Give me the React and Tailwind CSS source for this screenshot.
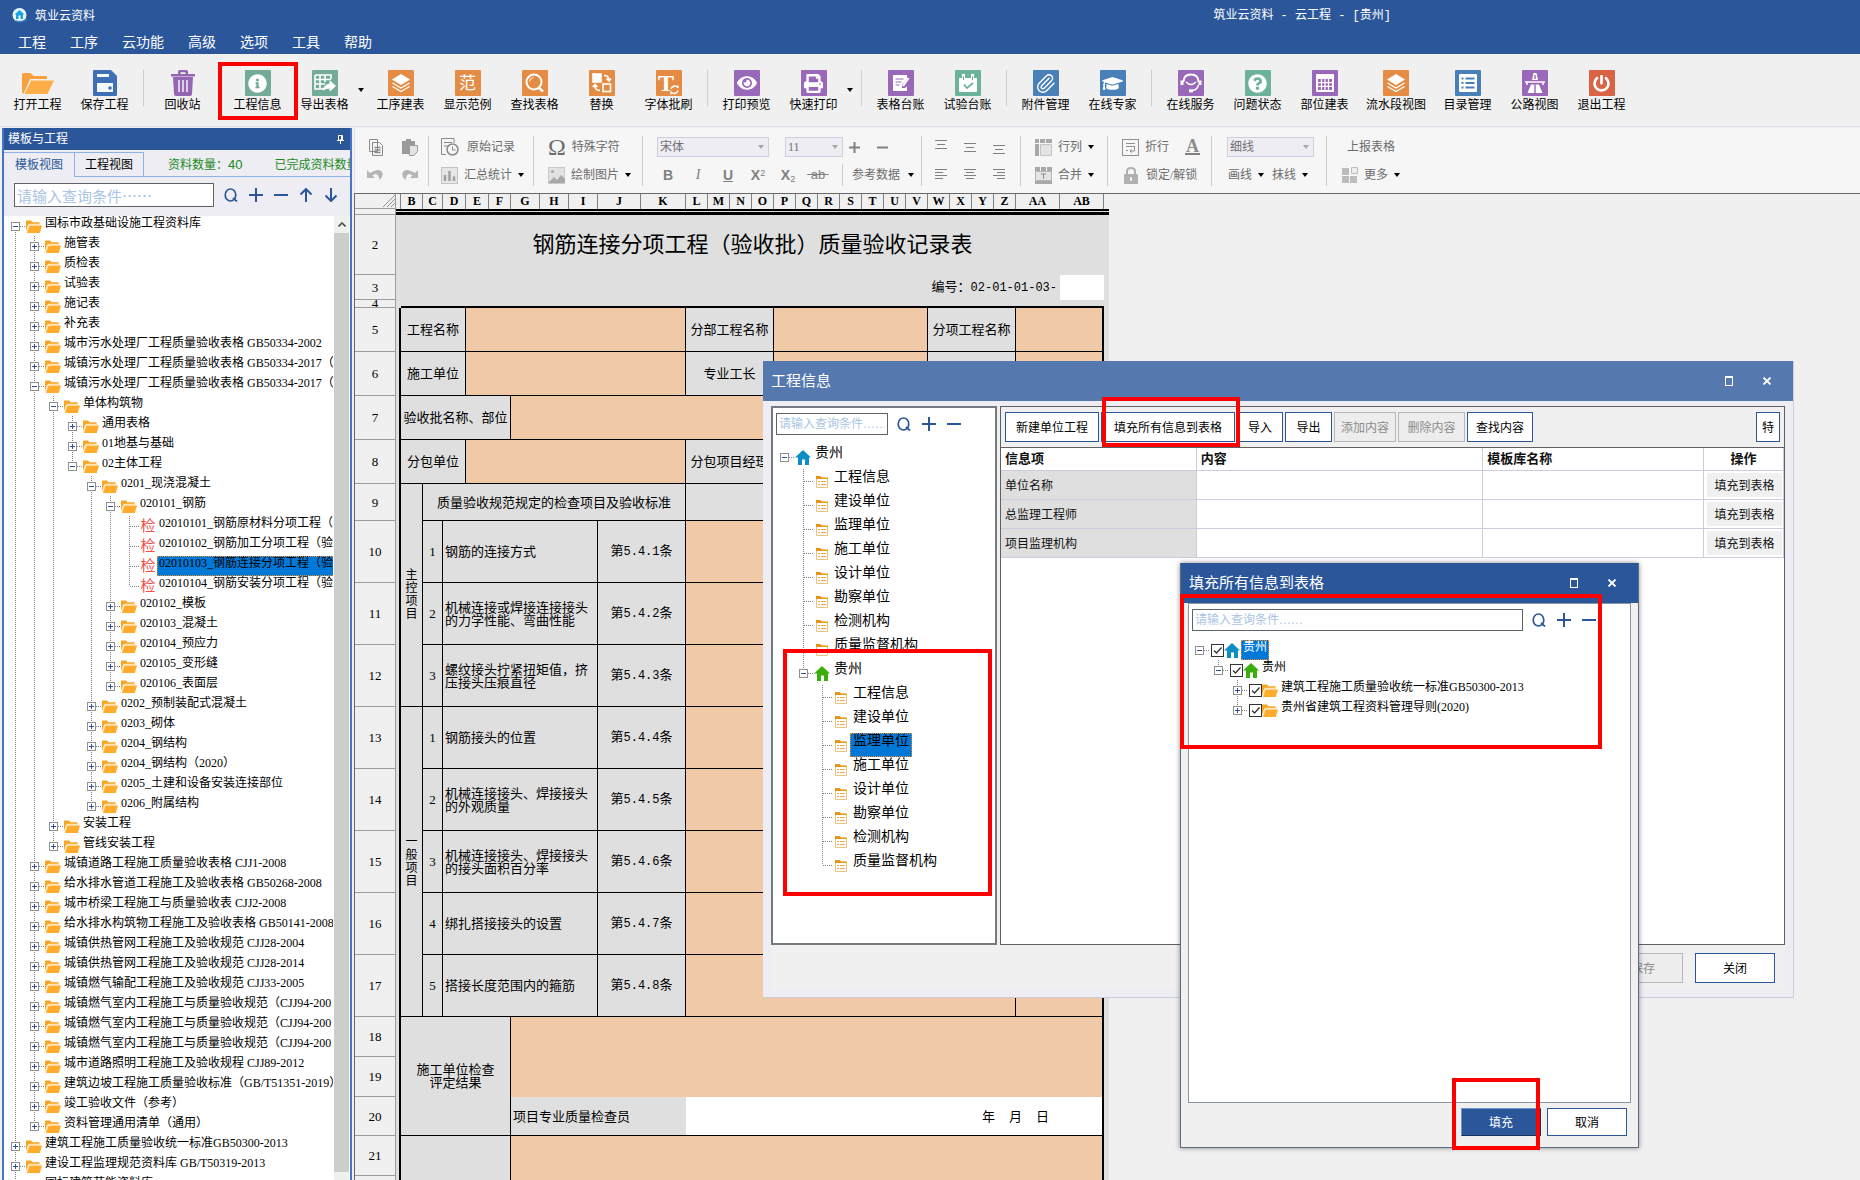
import { Fragment } from "react";
import { FaEye, FaPrint, FaGraduationCap, FaQuestionCircle, FaInfoCircle, FaPowerOff } from "react-icons/fa";
import { Paperclip } from "lucide-react";

/* ---------- small shared drawings ---------- */

const Caret = ({ className = "fill-black" }) => (
  <svg width="6" height="4" viewBox="0 0 6 4" className={`shrink-0 ${className}`}>
    <path d="M0 0h6L3 4z" />
  </svg>
);

const SearchIcon = () => (
  <svg width="14" height="14" viewBox="0 0 14 14" fill="none" stroke="#2b579a" strokeWidth="1.700">
    <ellipse cx="6.500" cy="7" rx="5.300" ry="6" />
    <path d="M9 10l4 3.500" />
  </svg>
);

const PlusIcon = () => (
  <svg width="14" height="14" viewBox="0 0 14 14" stroke="#2b579a" strokeWidth="2">
    <path d="M7 0v14M0 7h14" />
  </svg>
);

const MinusIcon = () => (
  <svg width="14" height="14" viewBox="0 0 14 14" stroke="#2b579a" strokeWidth="2">
    <path d="M0 7h14" />
  </svg>
);

const ArrowIcon = ({ down }) => (
  <svg width="14" height="14" viewBox="0 0 14 14" fill="none" stroke="#2b579a" strokeWidth="2">
    {down ? <path d="M7 0v13M1.500 7.500L7 13l5.500-5.500" /> : <path d="M7 14V1M1.500 6.500L7 1l5.500 5.500" />}
  </svg>
);

const FolderIcon = () => (
  <svg width="16" height="13" viewBox="0 0 16 13">
    <path d="M0 11V1.200Q0 .5 .7 .5H5l1.500 1.800H13.500V4H3.800L2 5z" fill="#f5a623" />
    <path d="M.8 12L3.300 4.300H14V5.500" fill="none" stroke="#fde3b5" strokeWidth="1.200" />
    <path d="M3.600 5.500H16L13.800 13H1z" fill="#ffab2b" />
  </svg>
);

const FormIcon = () => (
  <svg width="16" height="13" viewBox="0 0 16 13">
    <path d="M2.500 3v9.500h11V3.500" fill="none" stroke="#ecc27a" />
    <path d="M2 1h4.500l1.500 1.500h6V4H2z" fill="#e79412" />
    <path d="M4 6.500h2M7 6.500h5M4 9.500h2M7 9.500h5" stroke="#eaa94a" />
  </svg>
);

const HouseIcon = ({ color }) => (
  <svg width="16" height="15" viewBox="0 0 16 15">
    <path d="M8 0l8 7.500h-2V15h-4V9.500H7V15H3V7.500H0z" fill={color} />
  </svg>
);

const icons = {
  folder: <FolderIcon />,
  form: <FormIcon />,
  blueHouse: <HouseIcon color="#0a8fc4" />,
  greenHouse: <HouseIcon color="#3aae0a" />,
  check: <span className="text-[15px] leading-4 text-[#f0504a]">检</span>,
};

/* ---------- tree view ---------- */

// does the branch at `depth` go on below row `index`?
const continues = (rows, index, depth) => {
  for (let i = index + 1; i < rows.length; i++) {
    if (rows[i].depth < depth) return false;
    if (rows[i].depth === depth) return true;
  }
  return false;
};

const Joint = ({ h, top, bottom, sign }) => (
  <svg width="20" height={h} shapeRendering="crispEdges" className="block">
    <g stroke="#808080" strokeDasharray="1 1">
      {top && <path d={`M9.500 0V${h / 2}`} />}
      {bottom && <path d={`M9.500 ${h / 2}V${h}`} />}
      <path d={`M9.500 ${h / 2 + 0.5}H20`} />
    </g>
    {sign && (
      <>
        <rect x="5.500" y={h / 2 - 3.5} width="8" height="8" fill="#fff" stroke="#8f8f8f" />
        <path d={`M7 ${h / 2 + 0.5}h5`} stroke="#2f4f9f" />
        {sign === "+" && <path d={`M9.500 ${h / 2 - 2}v5`} stroke="#2f4f9f" />}
      </>
    )}
  </svg>
);

const Tree = ({ rows, rowHeight, rowClass, textClass, selectedClass = "text-black" }) => (
  <ul>
    {rows.map((row, i) => (
      <li key={i} className={`flex items-start ${rowClass}`}>
        {Array.from({ length: row.depth }, (_, d) => (
          <svg key={d} width="19" height={rowHeight} shapeRendering="crispEdges" className="shrink-0">
            {continues(rows, i, d) && (
              <path d={`M9.500 0V${rowHeight}`} stroke="#808080" strokeDasharray="1 1" />
            )}
          </svg>
        ))}
        {row.sign ? (
          <button aria-label={row.sign === "+" ? "展开" : "折叠"} className="shrink-0">
            <Joint h={rowHeight} top={i > 0} bottom={continues(rows, i, row.depth)} sign={row.sign} />
          </button>
        ) : (
          <span className="shrink-0">
            <Joint h={rowHeight} top={i > 0} bottom={continues(rows, i, row.depth)} />
          </span>
        )}
        {row.checkbox && (
          <span className="ml-px flex h-full shrink-0 items-center">
            <input
              type="checkbox"
              defaultChecked
              aria-label={row.text}
              className="peer h-[13px] w-[13px] appearance-none border border-[#333] bg-white"
            />
            <svg width="13" height="13" viewBox="0 0 13 13" className="pointer-events-none -ml-[13px] hidden peer-checked:block">
              <path d="M3 6.500l2.500 2.500L10.500 3.500" fill="none" stroke="#333" strokeWidth="1.300" />
            </svg>
          </span>
        )}
        <span className="flex h-full w-4 shrink-0 items-center justify-center">{icons[row.icon]}</span>
        <span
          className={`ml-px h-full whitespace-nowrap ${textClass} ${
            row.selected
              ? `bg-[#0078d7] outline-1 -outline-offset-1 outline-dotted outline-[#e88a2a] ${selectedClass}`
              : ""
          }`}
        >
          {row.text}
        </span>
      </li>
    ))}
  </ul>
);

const node = (depth, sign, text, extra) => ({ depth, sign, text, icon: "folder", ...extra });

const templateTree = [
  node(0, "-", "国标市政基础设施工程资料库"),
  node(1, "+", "施管表"),
  node(1, "+", "质检表"),
  node(1, "+", "试验表"),
  node(1, "+", "施记表"),
  node(1, "+", "补充表"),
  node(1, "+", "城市污水处理厂工程质量验收表格 GB50334-2002"),
  node(1, "+", "城镇污水处理厂工程质量验收表格 GB50334-2017（"),
  node(1, "-", "城镇污水处理厂工程质量验收表格 GB50334-2017（"),
  node(2, "-", "单体构筑物"),
  node(3, "+", "通用表格"),
  node(3, "+", "01地基与基础"),
  node(3, "-", "02主体工程"),
  node(4, "-", "0201_现浇混凝土"),
  node(5, "-", "020101_钢筋"),
  node(6, "", "02010101_钢筋原材料分项工程（", { icon: "check" }),
  node(6, "", "02010102_钢筋加工分项工程（验", { icon: "check" }),
  node(6, "", "02010103_钢筋连接分项工程（验", { icon: "check", selected: true }),
  node(6, "", "02010104_钢筋安装分项工程（验", { icon: "check" }),
  node(5, "+", "020102_模板"),
  node(5, "+", "020103_混凝土"),
  node(5, "+", "020104_预应力"),
  node(5, "+", "020105_变形缝"),
  node(5, "+", "020106_表面层"),
  node(4, "+", "0202_预制装配式混凝土"),
  node(4, "+", "0203_砌体"),
  node(4, "+", "0204_钢结构"),
  node(4, "+", "0204_钢结构（2020）"),
  node(4, "+", "0205_土建和设备安装连接部位"),
  node(4, "+", "0206_附属结构"),
  node(2, "+", "安装工程"),
  node(2, "+", "管线安装工程"),
  node(1, "+", "城镇道路工程施工质量验收表格 CJJ1-2008"),
  node(1, "+", "给水排水管道工程施工及验收表格 GB50268-2008"),
  node(1, "+", "城市桥梁工程施工与质量验收表 CJJ2-2008"),
  node(1, "+", "给水排水构筑物工程施工及验收表格 GB50141-2008"),
  node(1, "+", "城镇供热管网工程施工及验收规范 CJJ28-2004"),
  node(1, "+", "城镇供热管网工程施工及验收规范 CJJ28-2014"),
  node(1, "+", "城镇燃气输配工程施工及验收规范 CJJ33-2005"),
  node(1, "+", "城镇燃气室内工程施工与质量验收规范（CJJ94-200"),
  node(1, "+", "城镇燃气室内工程施工与质量验收规范（CJJ94-200"),
  node(1, "+", "城镇燃气室内工程施工与质量验收规范（CJJ94-200"),
  node(1, "+", "城市道路照明工程施工及验收规程 CJJ89-2012"),
  node(1, "+", "建筑边坡工程施工质量验收标准（GB/T51351-2019）"),
  node(1, "+", "竣工验收文件（参考）"),
  node(1, "+", "资料管理通用清单（通用）"),
  node(0, "+", "建筑工程施工质量验收统一标准GB50300-2013"),
  node(0, "+", "建设工程监理规范资料库 GB/T50319-2013"),
  node(0, "+", "国标建筑节能资料库"),
];

const units = ["工程信息", "建设单位", "监理单位", "施工单位", "设计单位", "勘察单位", "检测机构", "质量监督机构"];

const infoTree = [
  node(0, "-", "贵州", { icon: "blueHouse" }),
  ...units.map((text) => node(1, "", text, { icon: "form" })),
  node(1, "-", "贵州", { icon: "greenHouse" }),
  ...units.map((text) => node(2, "", text, { icon: "form", selected: text === "监理单位" })),
];

const fillTree = [
  node(0, "-", "贵州", { icon: "blueHouse", checkbox: true, selected: true }),
  node(1, "-", "贵州", { icon: "greenHouse", checkbox: true }),
  node(2, "+", "建筑工程施工质量验收统一标准GB50300-2013", { checkbox: true }),
  node(2, "+", "贵州省建筑工程资料管理导则(2020)", { checkbox: true }),
];

/* ---------- main toolbar ---------- */

const Layers = () => (
  <svg width="20" height="20" viewBox="0 0 20 20">
    <path d="M10 1l9 5.500-9 5.500-9-5.500z" fill="#fff" />
    <path d="M1.500 10L10 15l8.500-5M1.500 13.500l8.500 5 8.500-5" fill="none" stroke="#fff" strokeWidth="1.400" />
  </svg>
);

const OpenFolder = () => (
  <svg width="32" height="26" viewBox="0 0 32 26">
    <path d="M0 22V4.500Q0 3 1.500 3h7l3 3H24q1 0 1 1v2H8L1.500 24z" fill="#f8a03c" />
    <path d="M9 10.500h23L25.500 24H2.500z" fill="#ffae4a" />
  </svg>
);

const Floppy = () => (
  <svg width="24" height="26" viewBox="0 0 24 26">
    <path d="M1 0h17l6 6v19q0 1-1 1H1q-1 0-1-1V1q0-1 1-1z" fill="#3f6fb5" />
    <path d="M4 4h12v3H4zM4 13h16v9H4z" fill="#f4f7fc" />
    <circle cx="17" cy="18" r="1.800" fill="#3f6fb5" />
  </svg>
);

const Bin = () => (
  <svg width="24" height="26" viewBox="0 0 24 26" fill="#9567b3">
    <path d="M7 4V1.500Q7 0 8.500 0h7Q17 0 17 1.500V4h7v2.500H0V4zM9.500 2.300V4h5V2.300z" fillRule="evenodd" />
    <path d="M2 7h20l-1 17q0 2-2 2H5q-2 0-2-2z" />
    <path d="M8 10v12M12 10v12M16 10v12" stroke="#f0e8f5" strokeWidth="1.600" />
  </svg>
);

const ExportTable = () => (
  <svg width="22" height="20" viewBox="0 0 22 20" fill="none" stroke="#fff">
    <path d="M1 2h16v4M1 2v14h9M1 6.500h16M1 11h10M6 2v14M11 2v7" strokeWidth="1.600" />
    <path d="M9 17q2-6 7-6V8l5.500 5-5.500 5v-3q-4 0-7 2z" fill="#fff" />
  </svg>
);

const Magnifier = () => (
  <svg width="20" height="20" viewBox="0 0 20 20" fill="none" stroke="#fff" strokeWidth="2">
    <circle cx="9" cy="9" r="7.500" />
    <path d="M13.500 14.500l4.500 4" strokeWidth="2.500" />
    <path d="M4.500 8.500Q5 5 8.500 4.500" strokeWidth="1" />
  </svg>
);

const Swap = () => (
  <svg width="20" height="20" viewBox="0 0 20 20" fill="none" stroke="#fff" strokeWidth="1.600">
    <rect x="1" y="1" width="8" height="8" fill="#fff" />
    <rect x="11" y="11" width="7.500" height="7.500" />
    <path d="M12 2.500q5 0 5 5M14.500 5.500L17 8l2-2.500M8 17.500q-5 0-5-5M.8 14L3 11.500 5.500 14" />
  </svg>
);

const FontBrush = () => (
  <span className="flex items-end">
    <span className="text-[24px] font-bold leading-6 [font-family:'Liberation_Serif',serif]">T</span>
    <svg width="9" height="10" viewBox="0 0 9 10" fill="none" stroke="#fff" strokeWidth="1.300" className="-ml-1">
      <path d="M1 4q1-3 4-3 2 0 3 2V.5M8 5.500q-1 3-4 3-2 0-3-2v3" />
    </svg>
  </span>
);

const Ledger = () => (
  <svg width="18" height="18" viewBox="0 0 18 18">
    <path d="M1 1h14v4l-5 6v3h3l2-2v5H1z" fill="#fff" />
    <path d="M3.500 5h8M3.500 8h6M3.500 11h4" stroke="#9968b8" />
    <path d="M11 12l5.500-8" stroke="#fff" strokeWidth="2.200" />
  </svg>
);

const CalendarCheck = () => (
  <svg width="18" height="19" viewBox="0 0 18 19">
    <path d="M0 4h18v13q0 1-1 1H1q-1 0-1-1z" fill="#fff" />
    <path d="M4.500 0v6M13.500 0v6" stroke="#fff" strokeWidth="3" />
    <path d="M4.500 2v4M13.500 2v4" stroke="#6db39c" strokeWidth="1" />
    <path d="M5 10.500l3 3.500 6-5" fill="none" stroke="#6db39c" strokeWidth="1.800" />
  </svg>
);

const Headset = () => (
  <svg width="22" height="20" viewBox="0 0 22 20" fill="none" stroke="#fff" strokeWidth="1.800">
    <path d="M3.500 9q0-7.500 7.500-7.500T18.500 9" />
    <path d="M2 7.500v4.500M20 7.500v4.500" strokeWidth="3" />
    <path d="M6 9q5 5 10 0M18.500 12q-1.500 5-6 5.500" strokeWidth="1.500" />
    <path d="M9 17.800h4" strokeWidth="3" />
  </svg>
);

const TableGrid = () => (
  <svg width="18" height="18" viewBox="0 0 18 18">
    <rect width="18" height="18" rx="1" fill="#fff" />
    <path d="M2 5h14v11H2z" fill="#9968b8" />
    <path d="M2 8.700h14M2 12.400h14M5.500 5v11M9 5v11M12.500 5v11" stroke="#fff" strokeWidth="1.200" />
  </svg>
);

const Directory = () => (
  <svg width="18" height="18" viewBox="0 0 18 18">
    <rect width="18" height="18" rx="1" fill="#fff" />
    <path d="M2.500 4.500h2M6.500 4.500h9M2.500 9h2M6.500 9h9M2.500 13.500h2M6.500 13.500h9" stroke="#4a80b8" strokeWidth="2" />
  </svg>
);

const Highway = () => (
  <svg width="22" height="22" viewBox="0 0 22 22">
    <path d="M9.500 1h3l1.500 7H8z" fill="#fff" />
    <path d="M1 10h20M3 10v3M19 10v3" stroke="#fff" strokeWidth="1.500" />
    <path d="M7 12.500h8l3.500 8.500h-15z" fill="#fff" />
    <path d="M11 3v4M11 12v9" stroke="#9f70bd" strokeWidth="1.500" />
  </svg>
);

const orange = "bg-[#e58c44]";
const green = "bg-[#72ab97]";
const purple = "bg-[#9968b8]";
const blue = "bg-[#4a80b8]";
const red = "bg-[#d96344]";

const toolGroups = [
  [
    { label: "打开工程", icon: <OpenFolder /> },
    { label: "保存工程", icon: <Floppy /> },
  ],
  [
    { label: "回收站", icon: <Bin />, gapAfter: true },
    { label: "工程信息", color: green, icon: <FaInfoCircle size={19} /> },
    { label: "导出表格", color: green, icon: <ExportTable />, menu: true },
    { label: "工序建表", color: orange, icon: <Layers /> },
    { label: "显示范例", color: orange, icon: <span className="text-[17px] leading-none">范</span> },
    { label: "查找表格", color: orange, icon: <Magnifier /> },
    { label: "替换", color: orange, icon: <Swap /> },
    { label: "字体批刷", color: orange, icon: <FontBrush /> },
  ],
  [
    { label: "打印预览", color: purple, icon: <FaEye size={20} /> },
    { label: "快速打印", color: purple, icon: <FaPrint size={19} />, menu: true },
  ],
  [
    { label: "表格台账", color: purple, icon: <Ledger /> },
    { label: "试验台账", color: "bg-[#6db39c]", icon: <CalendarCheck /> },
  ],
  [
    { label: "附件管理", color: blue, icon: <Paperclip size={21} strokeWidth={1.6} /> },
    { label: "在线专家", color: blue, icon: <FaGraduationCap size={21} /> },
  ],
  [
    { label: "在线服务", color: purple, icon: <Headset /> },
    { label: "问题状态", color: "bg-[#6db39c]", icon: <FaQuestionCircle size={19} /> },
    { label: "部位建表", color: purple, icon: <TableGrid /> },
    { label: "流水段视图", color: orange, icon: <Layers />, wide: true },
    { label: "目录管理", color: blue, icon: <Directory /> },
    { label: "公路视图", color: purple, icon: <Highway /> },
    { label: "退出工程", color: red, icon: <FaPowerOff size={17} /> },
  ],
];

const MainToolbar = () => (
  <div className="flex h-[73px] shrink-0 items-start border-b border-[#e2e2ee] bg-[#f0f0f0] pl-1 pt-4">
    {toolGroups.map((group, g) => (
      <Fragment key={g}>
        {g > 0 && (
          <div className="flex h-9 w-[11px] shrink-0 justify-center">
            <div className="w-px bg-[#cfcfcf]" />
          </div>
        )}
        {group.map((tool) => (
          <Fragment key={tool.label}>
            <button className={`flex shrink-0 flex-col items-center ${tool.wide ? "w-[76px]" : "w-[67px]"}`}>
              <span className={`flex h-[26px] items-center justify-center rounded-[1px] text-white ${tool.color ? `w-[26px] ${tool.color}` : ""}`}>
                {tool.icon}
              </span>
              <span className="text-xs leading-[19px] text-black">{tool.label}</span>
            </button>
            {tool.menu && (
              <button aria-label={`${tool.label}菜单`} className="flex h-10 w-[9px] shrink-0 items-center">
                <Caret />
              </button>
            )}
            {tool.gapAfter && <div className="w-2 shrink-0" />}
          </Fragment>
        ))}
      </Fragment>
    ))}
  </div>
);

/* ---------- left panel ---------- */

const SearchBox = ({ className, inputClass, gap, children }) => (
  <div className={`flex shrink-0 items-center ${className}`}>
    <input
      type="text"
      aria-label="查询条件"
      placeholder="请输入查询条件……"
      className={`min-w-0 border border-[#5f6368] bg-white px-0.5 placeholder:text-[#a9c4e4] ${inputClass}`}
    />
    <div className={`flex shrink-0 items-center ${gap}`}>
      <button aria-label="查询"><SearchIcon /></button>
      <button aria-label="展开全部"><PlusIcon /></button>
      <button aria-label="折叠全部"><MinusIcon /></button>
      {children}
    </div>
  </div>
);

const TemplatePanel = () => (
  <aside className="ml-0.5 flex w-[350px] shrink-0 flex-col overflow-hidden border-x-2 border-[#4774c4] bg-[#ededf3]">
    <div className="flex h-[22px] shrink-0 items-center justify-between bg-[#2b579a] pl-1 pr-1.5 text-xs text-white">
      <h2>模板与工程</h2>
      <button aria-label="固定">
        <svg width="7" height="9" viewBox="0 0 7 9" fill="none" stroke="#fff">
          <path d="M1.500 .5h4v4.500h-4zM0 5.500h7M3.500 6v3M4.500 1v4" />
        </svg>
      </button>
    </div>
    <div className="flex h-[27px] shrink-0 items-stretch whitespace-nowrap text-xs">
      <button className="mt-0.5 w-[70px] border-t border-[#8db1e8] text-[#2b579a]">模板视图</button>
      <button className="mt-0.5 w-[70px] border border-[#8db1e8] text-black">工程视图</button>
      <div className="flex flex-1 items-center gap-8 overflow-hidden border-b border-[#8db1e8] pl-6 pt-1 text-[#1c8a1c]">
        <span>资料数量：<span className="text-[13px] leading-4 [font-family:'Liberation_Sans',sans-serif]">40</span></span>
        <span>已完成资料数量</span>
      </div>
    </div>
    <SearchBox
      className="h-[39px] pb-[3px] pl-2.5"
      inputClass="h-6 w-[200px] text-[15px] [font-family:'Noto_Sans_CJK_SC',sans-serif]"
      gap="gap-[11px] pl-2.5"
    >
      <button aria-label="上一个"><ArrowIcon /></button>
      <button aria-label="下一个"><ArrowIcon down /></button>
    </SearchBox>
    <div className="flex min-h-0 flex-1 bg-white">
      <div className="flex-1 overflow-hidden pl-0.5">
        <Tree rows={templateTree} rowHeight={20} rowClass="h-5" textClass="px-0.5 text-xs leading-[14px]" />
      </div>
      <div className="mx-px flex w-[15px] shrink-0 flex-col bg-[#f0f0f0]">
        <button aria-label="向上滚动" className="flex h-[17px] items-center justify-center">
          <svg width="8" height="5" viewBox="0 0 8 5" fill="none" stroke="#505050" strokeWidth="1.600">
            <path d="M.5 4.500L4 1l3.500 3.500" />
          </svg>
        </button>
        <div className="mb-2 flex-1 bg-[#cdcdcd]" />
      </div>
    </div>
  </aside>
);

/* ---------- format bar ---------- */

const Group = ({ width, first, children }) => (
  <div className={`flex shrink-0 flex-col justify-between ${width} ${first ? "" : "border-l border-[#cccccc]"}`}>
    {children}
  </div>
);

const Line = ({ className = "", children }) => <div className={`flex h-[22px] items-center ${className}`}>{children}</div>;

const Picker = ({ label, value, className }) => (
  <div className={`flex h-5 items-center border border-[#cfcfe0] bg-[#ededf3] pr-1 ${className}`}>
    <select aria-label={label} className="h-full min-w-0 flex-1 appearance-none pl-0.5 text-xs text-[#707070]">
      <option>{value}</option>
    </select>
    <Caret className="fill-[#a8a8a8]" />
  </div>
);

const Bars = ({ d }) => (
  <svg width="12" height="14" viewBox="0 0 12 14" stroke="#808080" shapeRendering="crispEdges">
    <path d={d} />
  </svg>
);

const FormatBar = () => (
  <div className="flex h-[65px] shrink-0 border-l border-[#e2e2ee] bg-[#f6f6f6] pb-[7px] pt-2 text-xs text-[#6c6c6c]">
    <Group width="w-[73px]" first>
      <Line className="gap-[18px] pl-3.5">
        <button aria-label="复制">
          <svg width="15" height="17" viewBox="0 0 15 17" fill="#f6f6f6" stroke="#8a8a8a">
            <path d="M.5 .5h8v12h-8zM3.500 3.500h7l3 3v10h-10z" />
            <path d="M5.500 8.500h6M5.500 11h6M5.500 13.500h6" strokeWidth="1.500" />
          </svg>
        </button>
        <button aria-label="粘贴">
          <svg width="16" height="17" viewBox="0 0 16 17" fill="#9a9a9a">
            <path d="M4 0h5v2h4v4H7v9H0V2h4z" />
            <path d="M7.500 6.500h8v6l-3.500 4h-4.500z" fill="#e4e4e4" stroke="#9a9a9a" />
          </svg>
        </button>
      </Line>
      <Line className="gap-[17px] pl-3">
        <button aria-label="撤销">
          <svg width="17" height="12" viewBox="0 0 17 12">
            <path d="M0 1v8h8L5.500 6.500Q11 2 12.500 11q4-3 3-7Q13-2 3 4z" fill="#b5b5b5" />
          </svg>
        </button>
        <button aria-label="重做">
          <svg width="17" height="12" viewBox="0 0 17 12">
            <path d="M17 1v8H9l2.500-2.500Q6 2 4.500 11q-4-3-3-7Q4-2 14 4z" fill="#b5b5b5" />
          </svg>
        </button>
      </Line>
    </Group>
    <Group width="w-[105px]">
      <Line className="pl-3">
        <button className="flex items-center gap-2">
          <svg width="18" height="18" viewBox="0 0 18 18" fill="none" stroke="#8a8a8a">
            <path d="M13 5V.5H.5v16H5M3 4.500h8M3 8h4" />
            <circle cx="11.500" cy="11.500" r="5.500" strokeWidth="1.500" />
            <path d="M11.500 8.500v3.500h3" />
          </svg>
          原始记录
        </button>
      </Line>
      <Line className="pl-3">
        <button className="flex items-center gap-1.5">
          <svg width="17" height="17" viewBox="0 0 17 17">
            <rect x=".5" y=".5" width="16" height="16" fill="#e6e6e6" stroke="#c4c4c4" />
            <path d="M4 14V8M8.500 14V4M13 14V9.500" stroke="#a0a0a0" strokeWidth="2.500" />
          </svg>
          汇总统计
          <Caret />
        </button>
      </Line>
    </Group>
    <Group width="w-[109px]">
      <Line className="pl-3.5">
        <button className="flex items-center gap-1.5">
          <span className="text-[24px] leading-5">Ω</span>
          特殊字符
        </button>
      </Line>
      <Line className="pl-3.5">
        <button className="flex items-center gap-1.5">
          <svg width="17" height="17" viewBox="0 0 17 17">
            <rect x=".5" y=".5" width="16" height="16" fill="#e2e2e2" stroke="#cacaca" />
            <circle cx="4.500" cy="4.500" r="1.500" fill="#a8a8a8" />
            <path d="M0 16l6-6 3 3 4-5 4 4v4z" fill="#a8a8a8" />
          </svg>
          绘制图片
          <Caret />
        </button>
      </Line>
    </Group>
    <Group width="w-[279px]">
      <Line className="pl-3.5">
        <Picker label="字体" value="宋体" className="w-28" />
        <Picker label="字号" value="11" className="ml-4 w-[58px]" />
        <button aria-label="增大字号" className="ml-1.5">
          <svg width="11" height="11" stroke="#808080" strokeWidth="2"><path d="M5.500 0v11M0 5.500h11" /></svg>
        </button>
        <button aria-label="减小字号" className="ml-[17px]">
          <svg width="11" height="11" stroke="#808080" strokeWidth="2"><path d="M0 5.500h11" /></svg>
        </button>
      </Line>
      <Line className="[font-family:'Liberation_Sans','Noto_Sans_CJK_SC',sans-serif]">
        <div className="flex w-[199px] items-center pl-2.5 text-sm text-[#808080]">
          <button className="w-[30px] font-bold">B</button>
          <button className="w-[30px] italic [font-family:'Liberation_Serif',serif]">I</button>
          <button className="w-[30px] font-bold underline">U</button>
          <button className="w-[30px] font-bold">X<sup className="text-[9px] font-normal">2</sup></button>
          <button className="w-[30px] font-bold">X<sub className="text-[9px] font-normal">2</sub></button>
          <button className="w-[30px] text-[13px] line-through">&nbsp;ab&nbsp;</button>
        </div>
        <div className="flex h-full items-center border-l border-[#cccccc] pl-[9px]">
          <button className="flex items-center gap-2">参考数据 <Caret /></button>
        </div>
      </Line>
    </Group>
    <Group width="w-[99px]">
      <Line className="gap-[17px] pl-[13px]">
        <button aria-label="顶端对齐"><Bars d="M0 .5h12M2 4.500h8M0 8.500h12" /></button>
        <button aria-label="垂直居中"><Bars d="M0 3.500h12M2 7.500h8M0 11.500h12" /></button>
        <button aria-label="底端对齐"><Bars d="M0 5.500h12M2 9.500h8M0 13.500h12" /></button>
      </Line>
      <Line className="gap-[17px] pl-[13px]">
        <button aria-label="左对齐"><Bars d="M0 1.500h12M0 4.500h8M0 7.500h12M0 10.500h8" /></button>
        <button aria-label="居中"><Bars d="M0 1.500h12M2 4.500h8M0 7.500h12M2 10.500h8" /></button>
        <button aria-label="右对齐"><Bars d="M0 1.500h12M4 4.500h8M0 7.500h12M4 10.500h8" /></button>
      </Line>
    </Group>
    <Group width="w-[87px]">
      <Line className="pl-3.5">
        <button className="flex items-center gap-1.5">
          <svg width="17" height="17" viewBox="0 0 17 17" fill="#a8a8a8">
            <path d="M0 0h4v4H0zM5 0h5v4H5zM11 0h6v4h-6zM0 5h4v12H0z" />
            <path d="M5.500 5.500h11v11h-11z" fill="#e4e4e4" stroke="#c4c4c4" />
          </svg>
          行列
          <Caret />
        </button>
      </Line>
      <Line className="pl-3.5">
        <button className="flex items-center gap-1.5">
          <svg width="17" height="17" viewBox="0 0 17 17" fill="#a8a8a8">
            <path d="M0 0h5v4H0zM6 0h5v4H6zM12 0h5v4h-5zM0 14h17v3H0z" />
            <path d="M.5 4.500h16v9H.5z" fill="#e4e4e4" stroke="#b4b4b4" />
            <path d="M6 7h5M8.500 7v5" stroke="#8a8a8a" />
          </svg>
          合并
          <Caret />
        </button>
      </Line>
    </Group>
    <Group width="w-[104px]">
      <Line className="pl-3.5">
        <button className="flex items-center gap-1.5">
          <svg width="17" height="17" viewBox="0 0 17 17" fill="none" stroke="#909090">
            <rect x=".5" y=".5" width="16" height="16" />
            <path d="M4 4.500h9M4 7.500h9M4 11.500h2M12.500 8v4H8l2-1.500M8 12l2 1.500" />
          </svg>
          折行
        </button>
        <button aria-label="文字颜色" className="ml-4 border-b-2 border-[#808080] px-px text-[18px] font-bold leading-[14px] text-[#8c8c8c]">A</button>
      </Line>
      <Line className="pl-4">
        <button className="flex items-center gap-2">
          <svg width="14" height="17" viewBox="0 0 14 17">
            <path d="M3 8V4.500Q3 1 7 1t4 3.500V8" fill="none" stroke="#b0b0b0" strokeWidth="2" />
            <rect y="7" width="14" height="10" rx="1" fill="#b0b0b0" />
            <path d="M7 10v4" stroke="#f0f0f0" strokeWidth="2" />
          </svg>
          锁定/解锁
        </button>
      </Line>
    </Group>
    <Group width="w-[115px]">
      <Line className="pl-[15px]">
        <Picker label="线型" value="细线" className="w-[87px]" />
      </Line>
      <Line className="gap-2 pl-4">
        <button className="flex items-center gap-1.5">画线 <Caret /></button>
        <button className="flex items-center gap-1.5">抹线 <Caret /></button>
      </Line>
    </Group>
    <Group width="flex-1">
      <Line className="pl-5"><button>上报表格</button></Line>
      <Line className="pl-[15px]">
        <button className="flex items-center gap-1.5">
          <svg width="16" height="16" viewBox="0 0 16 16" fill="#bcbcbc">
            <path d="M0 1h7v7H0zM0 9h7v7H0zM8 9h7v7H8z" />
            <path d="M9.500 .5h6v6h-6z" fill="#eee" stroke="#bcbcbc" />
          </svg>
          更多
          <Caret />
        </button>
      </Line>
    </Group>
  </div>
);

/* ---------- spreadsheet ---------- */

const columns = [
  ["B", "w-[22px]"], ["C", "w-5"], ["D", "w-[23px]"], ["E", "w-[23px]"], ["F", "w-[22px]"],
  ["G", "w-[29px]"], ["H", "w-[29px]"], ["I", "w-[29px]"], ["J", "w-[43px]"], ["K", "w-[45px]"],
  ..."LMNOPQRSTUVWXYZ".split("").map((letter) => [letter, "w-[22px]"]),
  ["AA", "w-11"], ["AB", "w-11"],
];

const mono = "text-xs [font-family:'Liberation_Mono',monospace]";

const RowHead = ({ n, h }) => (
  <th scope="row" className={`border-b border-r border-[#9c9c9c] bg-[#f0f0f0] text-[13px] font-normal ${h}`}>
    <div className={`flex items-center justify-center overflow-hidden leading-none ${n === 4 ? "h-[7px]" : ""}`}>{n}</div>
  </th>
);

// the narrow column A, which also carries the form's heavy left rule
const Edge = ({ ruled = true }) => <td className={ruled ? "border-r-2 border-black" : ""} />;

const Label = ({ className = "", ...props }) => (
  <td className={`border-b border-r border-black bg-[#dfdfdf] text-center ${className}`} {...props} />
);

const Fill = ({ last, className = "border-b", ...props }) => (
  <td className={`border-black bg-[#f0c9a6] ${last ? "border-r-2" : "border-r"} ${className}`} {...props} />
);

const checks = [
  [10, "1", "钢筋的连接方式", "5.4.1"],
  [11, "2", "机械连接或焊接连接接头的力学性能、弯曲性能", "5.4.2"],
  [12, "3", "螺纹接头拧紧扭矩值，挤压接头压痕直径", "5.4.3"],
  [13, "1", "钢筋接头的位置", "5.4.4"],
  [14, "2", "机械连接接头、焊接接头的外观质量", "5.4.5"],
  [15, "3", "机械连接接头、焊接接头的接头面积百分率", "5.4.6"],
  [16, "4", "绑扎搭接接头的设置", "5.4.7"],
  [17, "5", "搭接长度范围内的箍筋", "5.4.8"],
];

const VerticalLabel = ({ rows, children }) => (
  <Label rowSpan={rows}>
    <div className="mx-auto w-3 text-xs leading-[13px]">{children}</div>
  </Label>
);

const Sheet = () => (
  <div className="min-h-0 flex-1 overflow-hidden border-l border-t border-[#696969] bg-[#f0f0f0]">
    <table className="w-[754px] table-fixed border-separate border-spacing-0 bg-[#dfdfdf] text-[13px] leading-[13px] text-black">
      <colgroup>
        <col className="w-[41px]" />
        <col className="w-[5px]" />
        {columns.map(([letter, w]) => <col key={letter} className={w} />)}
        <col className="w-[5px]" />
      </colgroup>
      <thead>
        <tr className="bg-[#f0f0f0]">
          <th className="h-[15px] border-b border-r border-[#9c9c9c] p-0">
            <svg width="12" height="12" viewBox="0 0 12 12" className="ml-auto block" stroke="#909090">
              <path d="M0 12L12 0M4 12l8-8M8 12l4-4" />
            </svg>
          </th>
          <th className="border-r border-[#808080] p-0" />
          {columns.map(([letter]) => (
            <th key={letter} scope="col" className="border-r border-[#808080] p-0 text-xs font-bold leading-[15px]">
              {letter}
            </th>
          ))}
          <th className="p-0" />
        </tr>
      </thead>
      <tbody className="[&_td]:p-0 [&_th]:p-0">
        <tr>
          <th className="h-1.5 border-b border-r border-[#9c9c9c] bg-[#f0f0f0]" />
          <td colSpan={29} className="border-b-[3px] border-t-2 border-black" />
        </tr>
        <tr>
          <RowHead n={2} h="h-[60px]" />
          <Edge ruled={false} />
          <td colSpan={27} className="text-center text-[22px] leading-8">钢筋连接分项工程（验收批）质量验收记录表</td>
        </tr>
        <tr>
          <RowHead n={3} h="h-[25px]" />
          <Edge ruled={false} />
          <td colSpan={26} className="text-right">
            <div className="pr-[3px]">
              编号：<span className={mono}>02-01-01-03-</span>
            </div>
          </td>
          <td className="bg-white" />
        </tr>
        <tr>
          <RowHead n={4} h="h-2" />
          <Edge ruled={false} />
          <td colSpan={27} className="border-b-2 border-black" />
        </tr>
        <tr>
          <RowHead n={5} h="h-11" />
          <Edge />
          <Label colSpan={3}>工程名称</Label>
          <Fill colSpan={7} />
          <Label colSpan={4}>分部工程名称</Label>
          <Fill colSpan={7} />
          <Label colSpan={4}>分项工程名称</Label>
          <Fill colSpan={2} last />
        </tr>
        <tr>
          <RowHead n={6} h="h-11" />
          <Edge />
          <Label colSpan={3}>施工单位</Label>
          <Fill colSpan={7} />
          <Label colSpan={4}>专业工长</Label>
          <Fill colSpan={7} />
          <Label colSpan={4} />
          <Fill colSpan={2} last />
        </tr>
        <tr>
          <RowHead n={7} h="h-11" />
          <Edge />
          <Label colSpan={5}>验收批名称、部位</Label>
          <Fill colSpan={22} last />
        </tr>
        <tr>
          <RowHead n={8} h="h-11" />
          <Edge />
          <Label colSpan={3}>分包单位</Label>
          <Fill colSpan={7} />
          <Label colSpan={4}>分包项目经理</Label>
          <Fill colSpan={13} last />
        </tr>
        <tr>
          <RowHead n={9} h="h-[37px]" />
          <Edge />
          <VerticalLabel rows={4}>主控项目</VerticalLabel>
          <Label colSpan={9}>质量验收规范规定的检查项目及验收标准</Label>
          <Label colSpan={17} />
        </tr>
        {checks.map(([row, n, text, clause]) => (
          <tr key={row}>
            <RowHead n={row} h="h-[62px]" />
            <Edge />
            {row === 13 && <VerticalLabel rows={5}>一般项目</VerticalLabel>}
            <Label>{n}</Label>
            <Label colSpan={6}>
              <div className="px-0.5 text-left">{text}</div>
            </Label>
            <Label colSpan={2}>第<span className={mono}>{clause}</span>条</Label>
            <Fill colSpan={15} />
            <Fill colSpan={2} last />
          </tr>
        ))}
        <tr>
          <RowHead n={18} h="h-10" />
          <Edge />
          <Label colSpan={5} rowSpan={3}>施工单位检查<br />评定结果</Label>
          <Fill colSpan={22} last className="" />
        </tr>
        <tr>
          <RowHead n={19} h="h-10" />
          <Edge />
          <Fill colSpan={22} last className="" />
        </tr>
        <tr>
          <RowHead n={20} h="h-[39px]" />
          <Edge />
          <td colSpan={5} className="border-b border-black bg-[#dfdfdf]">
            <span className="pl-0.5">项目专业质量检查员</span>
          </td>
          <td colSpan={17} className="border-b border-r-2 border-black bg-white">
            <div className="flex justify-end gap-3.5 pr-[53px]">
              <span>年</span>
              <span>月</span>
              <span>日</span>
            </div>
          </td>
        </tr>
        <tr>
          <RowHead n={21} h="h-10" />
          <Edge />
          <Label colSpan={5} rowSpan={2} />
          <Fill colSpan={22} rowSpan={2} last />
        </tr>
        <tr>
          <RowHead n={22} h="h-10" />
          <Edge />
        </tr>
      </tbody>
    </table>
  </div>
);

/* ---------- dialogs ---------- */

const TitleBar = ({ title, color }) => (
  <div className={`flex h-10 shrink-0 items-center pl-2 pr-[21px] text-white ${color}`}>
    <h2 className="flex-1 text-[15px]">{title}</h2>
    <button aria-label="最大化" className="mr-7">
      <svg width="10" height="10" viewBox="0 0 10 10" fill="none" stroke="#fff" shapeRendering="crispEdges">
        <path d="M1.500 1.500h7v8h-7zM1 .5h8" />
      </svg>
    </button>
    <button aria-label="关闭">
      <svg width="10" height="8" viewBox="0 0 10 8" stroke="#fff" strokeWidth="1.800">
        <path d="M1.500 .5l7 7M8.500 .5l-7 7" />
      </svg>
    </button>
  </div>
);

const PlainButton = ({ className = "", disabled, children }) => (
  <button
    disabled={disabled}
    className={`shrink-0 border pt-0.5 text-xs ${
      disabled ? "border-[#b8b8b8] bg-[#ededed] text-[#8c8c8c]" : "border-[#2b579a] bg-white text-black"
    } ${className}`}
  >
    {children}
  </button>
);

const InfoDialog = () => (
  <section
    aria-label="工程信息"
    className="absolute left-[763px] top-[361px] flex h-[637px] w-[1031px] flex-col border-b border-r border-[#cbcbdd] bg-[#ededf3]"
  >
    <TitleBar title="工程信息" color="bg-[#5578ae]" />
    <div className="mx-2 mt-[5px] flex min-h-0 flex-1 gap-[3px] bg-[#f0f0f0]">
      <div className="w-[226px] shrink-0 border-2 border-[#737b80] bg-white">
        <SearchBox className="pl-[3px] pt-[5px]" inputClass="h-[22px] w-28 text-xs" gap="gap-[11px] pl-[9px]" />
        <div className="pl-0.5 pt-2.5">
          <Tree rows={infoTree} rowHeight={24} rowClass="h-6" textClass="px-[3px] text-sm leading-4" />
        </div>
      </div>
      <div className="flex min-w-0 flex-1 flex-col border border-[#606060] bg-white">
        <div className="flex h-[41px] shrink-0 items-center gap-0.5 border-b border-[#606060] bg-[#f0f0f0] px-1">
          <PlainButton className="h-[30px] w-[94px]">新建单位工程</PlainButton>
          <PlainButton className="h-[30px] w-[134px]">填充所有信息到表格</PlainButton>
          <PlainButton className="h-[30px] w-[46px]">导入</PlainButton>
          <PlainButton className="h-[30px] w-[47px]">导出</PlainButton>
          <PlainButton className="h-[30px] w-[62px]" disabled>添加内容</PlainButton>
          <PlainButton className="h-[30px] w-[67px]" disabled>删除内容</PlainButton>
          <PlainButton className="h-[30px] w-[66px]">查找内容</PlainButton>
          <PlainButton className="ml-auto h-[30px] w-6">特</PlainButton>
        </div>
        <table className="w-full table-fixed border-separate border-spacing-0 text-left text-xs text-[#111] [&_td]:border-b [&_td]:border-r [&_td]:border-[#ccccdd] [&_th]:border-b [&_th]:border-r [&_th]:border-[#ccccdd]">
          <thead>
            <tr className="h-[23px] text-[13px] leading-4">
              <th className="w-[25%] px-1 py-0">信息项</th>
              <th className="w-[36.600%] px-1 py-0">内容</th>
              <th className="px-1 py-0">模板库名称</th>
              <th className="w-20 p-0 text-center">操作</th>
            </tr>
          </thead>
          <tbody>
            {["单位名称", "总监理工程师", "项目监理机构"].map((name) => (
              <tr key={name} className="h-[29px]">
                <td className="bg-[#dfdfdf] px-1 pb-0 pt-0.5">{name}</td>
                <td />
                <td />
                <td className="p-0 pl-[3px]">
                  <button className="block h-6 w-[75px] bg-[#f0f0f0] pt-0.5">填充到表格</button>
                </td>
              </tr>
            ))}
          </tbody>
        </table>
      </div>
    </div>
    <div className="mx-2 mb-[7px] flex h-[45px] shrink-0 items-start justify-end gap-3 bg-[#f0f0f0] pr-2.5 pt-2">
      <PlainButton className="h-[30px] w-20" disabled>保存</PlainButton>
      <PlainButton className="h-[30px] w-20">关闭</PlainButton>
    </div>
    {/* highlights */}
    <div className="pointer-events-none absolute left-[339px] top-9 h-[50px] w-[138px] border-4 border-[#ff0000]" />
    <div className="pointer-events-none absolute left-5 top-[288px] h-[247px] w-[209px] border-4 border-[#ff0000]" />
  </section>
);

const FillDialog = () => (
  <section
    aria-label="填充所有信息到表格"
    className="absolute left-[1180px] top-[563px] flex h-[585px] w-[459px] flex-col border-x border-b border-[#5c6b80] bg-[#f0f0f0] shadow-[0_0_5px_rgba(0,0,0,0.45)]"
  >
    <TitleBar title="填充所有信息到表格" color="bg-[#2b579a]" />
    <div className="mx-[7px] min-h-0 flex-1 border border-[#8a95a5] bg-white">
      <SearchBox className="pl-[3px] pt-[5px]" inputClass="h-[22px] w-[331px] text-xs" gap="gap-[11px] pl-[9px]" />
      <div className="pl-px pt-[9px]">
        <Tree rows={fillTree} rowHeight={20} rowClass="h-5" textClass="px-0.5 text-xs leading-[14px]" selectedClass="text-white" />
      </div>
    </div>
    <div className="flex h-11 shrink-0 items-start justify-end gap-1.5 pr-[11px] pt-[5px]">
      <button className="h-7 w-20 border border-b-[#17305a] border-l-[#6f95d0] border-r-[#17305a] border-t-[#6f95d0] bg-[#2b579a] pt-0.5 text-xs text-white">
        填充
      </button>
      <PlainButton className="h-7 w-20">取消</PlainButton>
    </div>
    {/* highlights */}
    <div className="pointer-events-none absolute -left-px top-[31px] h-[155px] w-[422px] border-4 border-[#ff0000]" />
    <div className="pointer-events-none absolute -bottom-[3px] left-[271px] h-[72px] w-[88px] border-4 border-[#ff0000]" />
  </section>
);

/* ---------- page ---------- */

const menus = ["工程", "工序", "云功能", "高级", "选项", "工具", "帮助"];

const App = () => (
  <div className="relative flex h-screen flex-col overflow-hidden bg-[#f0f0f0] [font-family:'Liberation_Serif','Noto_Sans_CJK_SC',sans-serif]">
    <header className="h-[54px] shrink-0 bg-[#2b579a] text-white">
      <div className="flex h-[31px] items-center pl-3 text-xs">
        <svg width="15" height="15" viewBox="0 0 15 15">
          <circle cx="7.500" cy="7" r="7" fill="#e8f8ff" />
          <path d="M7.500 2l5 4.500h-1.500V11h-7V6.500H2.500z" fill="#1ba3dc" />
          <path d="M6.500 7.500h2V11h-2z" fill="#fff" />
          <path d="M4 13q5 2 11-2" stroke="#2f7fd0" strokeWidth="1.500" fill="none" />
        </svg>
        <span className="ml-2 flex-1">筑业云资料</span>
        <h1 className="mr-[469px] [font-family:'Liberation_Mono','Noto_Sans_CJK_SC',monospace]">筑业云资料 - 云工程 - [贵州]</h1>
      </div>
      <nav className="flex h-[23px] items-center gap-6 pl-[18px] text-sm">
        {menus.map((name) => (
          <button key={name}>{name}</button>
        ))}
      </nav>
    </header>
    <MainToolbar />
    <div className="flex min-h-0 flex-1 pt-px">
      <TemplatePanel />
      <main className="ml-0.5 flex min-w-0 flex-1 flex-col">
        <FormatBar />
        <Sheet />
      </main>
    </div>
    <InfoDialog />
    <FillDialog />
    <div className="pointer-events-none absolute left-[218px] top-[62px] h-[58px] w-20 border-4 border-[#ff0000]" />
  </div>
);

export default App;
